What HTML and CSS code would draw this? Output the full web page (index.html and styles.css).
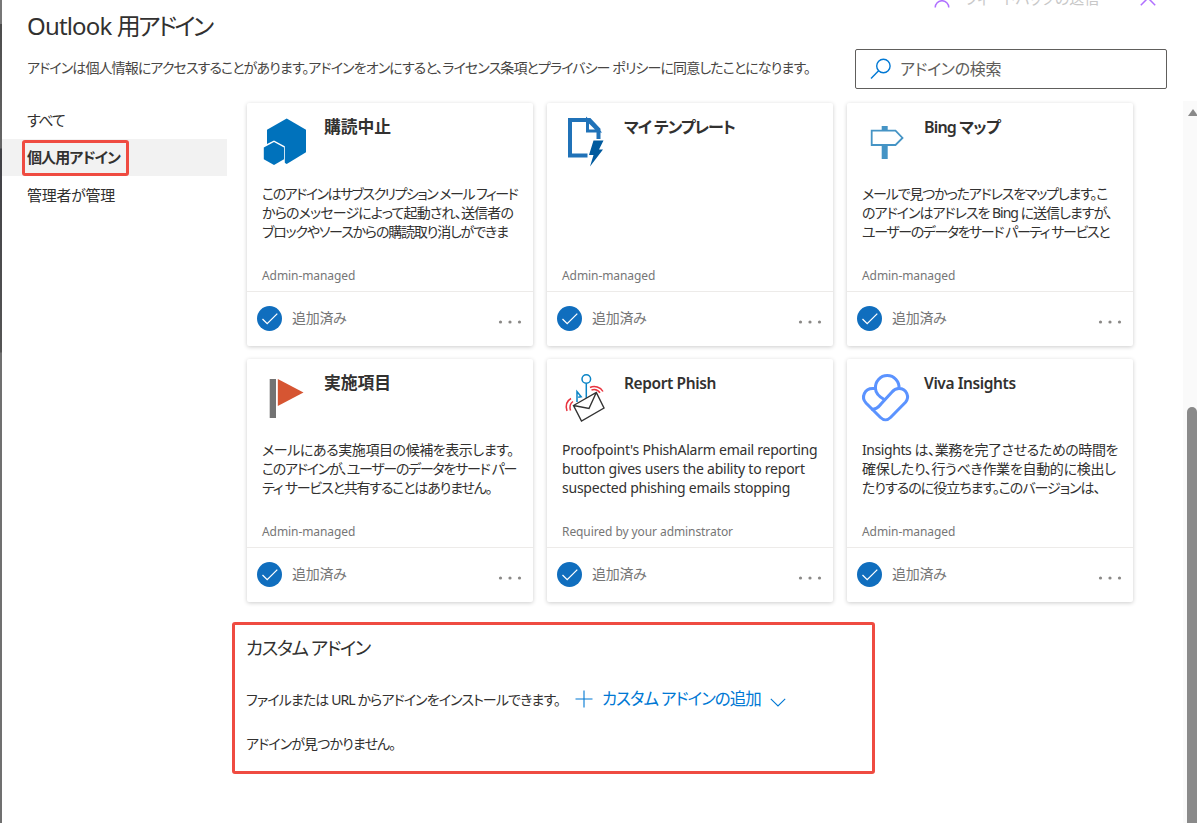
FILE: index.html
```
<!DOCTYPE html>
<html lang="ja">
<head>
  <meta charset="UTF-8" />
  <meta name="viewport" content="width=device-width, initial-scale=1" />
  <title>Outlook 用アドイン</title>
  <link rel="stylesheet" href="styles.css">
</head>
<body>

<!-- shared icons -->
<svg class="defs" width="0" height="0">
  <symbol id="check" viewBox="0 0 25 25">
    <circle cx="12.5" cy="12.5" r="12.5" fill="#106ebe"/>
    <path d="M5.5 13l4.7 4.7L20.3 7.6" fill="none" stroke="#fff" stroke-width="1.3"/>
  </symbol>
  <symbol id="dots" viewBox="0 0 24 4">
    <circle cx="2.5" cy="2" r="1.6"/><circle cx="12" cy="2" r="1.6"/><circle cx="21.5" cy="2" r="1.6"/>
  </symbol>
</svg>

<div class="edge"></div>

<div class="topbar">
  <svg class="person" width="16" height="18" viewBox="0 0 16 18"><circle cx="8" cy="5" r="4"/><path d="M1.2 17.5a6.8 6.8 0 0 1 13.6 0"/></svg>
  <span class="feedback">フィードバックの送信</span>
  <svg class="close" width="16" height="16" viewBox="0 0 16 16"><path d="M.8.8l14.4 14.4M15.2.8L.8 15.2"/></svg>
</div>

<div class="panel">
  <header class="header">
    <div class="intro">
      <h1><span class="t8">Outlook </span><span class="t26">用アドイン</span></h1>
      <p class="t9">アドインは個人情報にアクセスすることがあります。アドインをオンにすると、ライセンス条項とプライバシー ポリシーに同意したことになります。</p>
    </div>
    <div class="search">
      <svg width="22" height="22" viewBox="0 0 22 22"><circle cx="13.4" cy="8" r="6.7"/><path d="M8.6 12.8L1 20.6"/></svg>
      <span class="t3">アドインの検索</span>
    </div>
  </header>

  <div class="main">
    <nav class="nav">
      <a class="nav-item t12">すべて</a>
      <a class="nav-item active t9">個人用アドイン</a>
      <a class="nav-item t3">管理者が管理</a>
    </nav>

    <div class="content">
      <div class="grid">
        <div class="card">
          <div class="card-body">
            <div class="card-head">
              <svg width="48" height="48" viewBox="0 0 48 48">
                <path d="M24.7.5L44 11.8v22.5L24.7 46 5 34.500V11.8z" fill="#0072bc"/>
                <path d="M12 22.500l10.800 5.800v19.700H-1V29z" fill="#fff"/>
                <path d="M12 24l10 5.600v11.600L12 47 1.800 41.200V29.600z" fill="#0072bc"/>
              </svg>
              <h2 class="kanji">購読中止</h2>
            </div>
            <p class="desc"><span class="t15">このアドインはサブスクリプション メール フィード</span><br><span class="t8">からのメッセージによって起動され、送信者の</span><br><span class="t12">ブロックやソースからの購読取り消しができま</span></p>
            <p class="owner">Admin-managed</p>
          </div>
          <div class="card-foot"><svg class="check"><use href="#check"/></svg><span class="t3">追加済み</span><svg class="dots"><use href="#dots"/></svg></div>
        </div>

        <div class="card">
          <div class="card-body">
            <div class="card-head">
              <svg width="48" height="48" viewBox="0 0 48 48">
                <path d="M25.500 37.500H8V2h19.500l9 9.500v9.500" fill="none" stroke="#2072b8" stroke-width="4"/>
                <path d="M25.500 2v11h11z" fill="#fff" stroke="#2072b8" stroke-width="3"/>
                <path d="M31.500 22.500h10l-4.500 9h4L28 48.500l3.500-11.500H27z" fill="#005a9e"/>
              </svg>
              <h2 class="t11">マイ テンプレート</h2>
            </div>
            <p class="desc"></p>
            <p class="owner">Admin-managed</p>
          </div>
          <div class="card-foot"><svg class="check"><use href="#check"/></svg><span class="t3">追加済み</span><svg class="dots"><use href="#dots"/></svg></div>
        </div>

        <div class="card">
          <div class="card-body">
            <div class="card-head">
              <svg width="48" height="48" viewBox="0 0 48 48">
                <path d="M19.700 8h6v5h-6zM19.700 26.500h6v14.500h-6z" fill="#4594c5"/>
                <path d="M9.700 12.700H33.500L40.500 20l-7 7H9.700z" fill="#fff" stroke="#4594c5" stroke-width="1.8"/>
              </svg>
              <h2 class="t8">Bing マップ</h2>
            </div>
            <p class="desc"><span class="t12">メールで見つかったアドレスをマップします。こ</span><br><span class="t10">のアドインはアドレスを Bing に送信しますが、</span><br><span class="t14">ユーザーのデータをサード パーティ サービスと</span></p>
            <p class="owner">Admin-managed</p>
          </div>
          <div class="card-foot"><svg class="check"><use href="#check"/></svg><span class="t3">追加済み</span><svg class="dots"><use href="#dots"/></svg></div>
        </div>

        <div class="card">
          <div class="card-body">
            <div class="card-head">
              <svg width="48" height="48" viewBox="0 0 48 48">
                <path d="M7.700 5h6.300v39H7.700z" fill="#737373"/>
                <path d="M15.800 5L41.500 18.500 15.800 32z" fill="#d65532"/>
              </svg>
              <h2 class="kanji">実施項目</h2>
            </div>
            <p class="desc"><span class="t4">メールにある実施項目の候補を表示します。</span><br><span class="t13">このアドインが、ユーザーのデータをサード パー</span><br><span class="t12">ティ サービスと共有することはありません。</span></p>
            <p class="owner">Admin-managed</p>
          </div>
          <div class="card-foot"><svg class="check"><use href="#check"/></svg><span class="t3">追加済み</span><svg class="dots"><use href="#dots"/></svg></div>
        </div>

        <div class="card">
          <div class="card-body">
            <div class="card-head">
              <svg width="48" height="48" viewBox="0 0 48 48" fill="none">
                <path d="M24.300 9.500V24M15 28V17.500l4.200 5.200-3 .6" stroke="#0a84c6" stroke-width="1.500"/>
                <circle cx="24.300" cy="5" r="4.300" stroke="#0a84c6" stroke-width="1.500"/>
                <path d="M11.500 31.500L34.300 18.500 42 34 19.500 47zM11.500 31.500l15.500 3 7.300-16" fill="#fff" stroke="#333" stroke-width="1.400"/>
                <path d="M28 13.500c4.500-2.300 10.500-.5 13 4M29.500 16c3-1 6.500 0 8.500 2.800" stroke="#e8343f" stroke-width="1.500"/>
                <path d="M9 24.500c-4.500 2.500-5.500 7.500-4 12.500M11 27.500c-3 2-3.500 5.500-2.500 9" stroke="#e8343f" stroke-width="1.500"/>
              </svg>
              <h2 class="latin">Report Phish</h2>
            </div>
            <p class="desc t2">Proofpoint's PhishAlarm email reporting<br>button gives users the ability to report<br>suspected phishing emails stopping</p>
            <p class="owner">Required by your adminstrator</p>
          </div>
          <div class="card-foot"><svg class="check"><use href="#check"/></svg><span class="t3">追加済み</span><svg class="dots"><use href="#dots"/></svg></div>
        </div>

        <div class="card">
          <div class="card-body">
            <div class="card-head">
              <svg width="48" height="48" viewBox="0 0 48 48" fill="none" stroke="#5b93ff" stroke-width="3">
                <path d="M13.500 14.500a11.800 11.800 0 1 1 23.500 0c7.500 0 11 8.500 6.500 13.700L28.500 43.500c-3 3-7 3-10 0L4 29C-1.500 23 3 14.500 10.500 14.500h3c0 4 2 7.500 9.500 11.500"/>
                <path d="M37 14.500c-3 0-5 1-7 3.500L19 30c-3 4-6 5.500-9.500 5.500"/>
              </svg>
              <h2 class="latin">Viva Insights</h2>
            </div>
            <p class="desc"><span class="t4">Insights は、業務を完了させるための時間を</span><br><span class="t3">確保したり、行うべき作業を自動的に検出し</span><br><span class="t10">たりするのに役立ちます。このバージョンは、</span></p>
            <p class="owner">Admin-managed</p>
          </div>
          <div class="card-foot"><svg class="check"><use href="#check"/></svg><span class="t3">追加済み</span><svg class="dots"><use href="#dots"/></svg></div>
        </div>
      </div>

      <section class="custom">
        <h3 class="t14">カスタム アドイン</h3>
        <div class="custom-row">
          <span class="t9">ファイルまたは URL からアドインをインストールできます。</span>
          <a class="add">
            <svg width="18" height="18" viewBox="0 0 18 18"><path d="M9 .5v17M.5 9h17"/></svg>
            <span class="t10">カスタム アドインの追加</span>
            <svg class="chevron" width="16" height="9" viewBox="0 0 16 9"><path d="M.8.8L8 8 15.200.8"/></svg>
          </a>
        </div>
        <p class="t9">アドインが見つかりません。</p>
      </section>
    </div>
  </div>
</div>

<div class="scrollbar"><i class="arrow"></i><i class="thumb"></i></div>

</body>
</html>
```
FILE: styles.css
```
* { box-sizing: border-box; }
body {
  position: relative; margin: 0; height: 823px; overflow: hidden;
  background: #fff; color: #323130;
  font-family: "Noto Sans", "Noto Sans CJK JP", sans-serif;
  font-size: 14px; font-feature-settings: "palt"; white-space: nowrap;
}
h1, h2, h3, p { margin: 0; font-weight: normal; }
.defs { position: absolute; }

/* tracking, in tenths of a pixel */
.t2 { letter-spacing: -.23px; }
.t3 { letter-spacing: -.3px; }
.t4 { letter-spacing: -.42px; }
.t8 { letter-spacing: -.84px; }
.t9 { letter-spacing: -.9px; }
.t10 { letter-spacing: -1px; }
.t11 { letter-spacing: -1.1px; }
.t12 { letter-spacing: -1.17px; }
.t13 { letter-spacing: -1.28px; }
.t14 { letter-spacing: -1.42px; }
.t15 { letter-spacing: -1.5px; }
.t26 { letter-spacing: -2.6px; }

.edge {
  position: absolute; left: 0; top: 0; width: 2px; height: 823px;
  background: linear-gradient(#777 24px, #4c4c4c 24px, #666 148px, #404045 149px, #555 352px, #707070 353px);
}

/* bottom of the bar that is scrolled out at the top */
.topbar { position: absolute; top: -10px; left: 934px; display: flex; align-items: flex-start; }
.topbar svg { fill: none; stroke: #b070ff; stroke-width: 1.5; }
.person { width: 16px; }
.feedback { margin-left: 15px; width: 135px; font-size: 15px; line-height: 16px; color: #c8c8c8; }
.close { margin-left: 40px; }

.panel { padding-left: 2px; }
.header { display: flex; height: 101px; padding: 0 30px 0 25px; justify-content: space-between; }
h1 { margin-top: 9px; font-size: 24px; line-height: 34px; }
.intro p { margin-top: 15px; line-height: 20px; color: #484644; }
.search {
  display: flex; flex: none; align-items: center; width: 312px; height: 40px; margin-top: 49px;
  padding-left: 14px; border: 1px solid #605e5c; border-radius: 2px;
  font-size: 16px; color: #605e5c;
}
.search span { margin-top: -2px; }
.search svg { margin-right: 8px; fill: none; stroke: #0078d4; stroke-width: 1.4; }

.main { display: flex; }
.nav { width: 225px; font-size: 15px; }
.nav-item { display: flex; align-items: center; height: 38px; padding: 0 0 2px 25px; }
.nav-item.active { position: relative; background: #f2f2f2; font-weight: 600; height: 37px; }
.nav-item.active::after {
  content: ""; position: absolute; left: 20px; top: 1px; width: 101px; height: 30px;
  border: 3px solid #ef4b41; border-radius: 3px; box-sizing: content-box;
}

.content { padding: 2px 0 0 20px; }
.grid { display: grid; grid-template-columns: repeat(3, 286px); gap: 13px 14px; }
.card { height: 243px; border-radius: 2px; background: #fff; box-shadow: 0 1px 4px rgba(0,0,0,.2); }
.card-body { height: 189px; padding: 15px 15px 0; border-bottom: 1px solid #edebe9; }
.card-head { display: flex; }
.card-head svg { overflow: visible; }
.card-head h2 { margin: -1px 0 0 14px; font-size: 16px; font-weight: 600; line-height: 20px; }
.card-head .kanji { font-size: 16.8px; }
.card-head .latin { font-size: 15.5px; letter-spacing: -.4px; }
.desc { height: 57px; margin-top: 18px; line-height: 19px; }
.owner { margin-top: 25px; font-size: 12px; line-height: 20px; letter-spacing: -.08px; color: #767676; }
.card-foot { display: flex; align-items: center; height: 54px; padding: 0 11px 2px 10px; color: #767676; }
.card-foot span { margin-top: -2px; }
.check { width: 25px; height: 25px; margin-right: 10px; }
.dots { width: 24px; height: 4px; margin: 8px 0 0 auto; fill: #8a8886; }

.custom { width: 643px; height: 152px; margin: 20px 0 0 -15px; padding: 11px; border: 3px solid #ef4b41; border-radius: 3px; }
.custom h3 { font-size: 18.5px; line-height: 24px; }
.custom-row { display: flex; align-items: center; height: 24px; margin-top: 27px; }
.add { display: flex; align-items: center; margin-left: 15px; font-size: 16.5px; color: #0078d4; }
.add svg { fill: none; stroke: #0078d4; stroke-width: 1.1; margin-right: 9px; }
.add .chevron { margin: 6px 0 0 9px; }
.add span { margin-top: -2px; }
.custom p { margin-top: 23px; line-height: 20px; }

.scrollbar { position: absolute; right: 0; top: 101px; width: 14px; height: 722px; background: #fafafa; }
.arrow { position: absolute; left: 5px; top: 8px; border: 5px solid transparent; border-top: 0; border-bottom: 7px solid #8a8a8a; }
.thumb { position: absolute; left: 4px; top: 306px; width: 10px; height: 430px; border-radius: 5px; background: #8a8a8a; }
```
